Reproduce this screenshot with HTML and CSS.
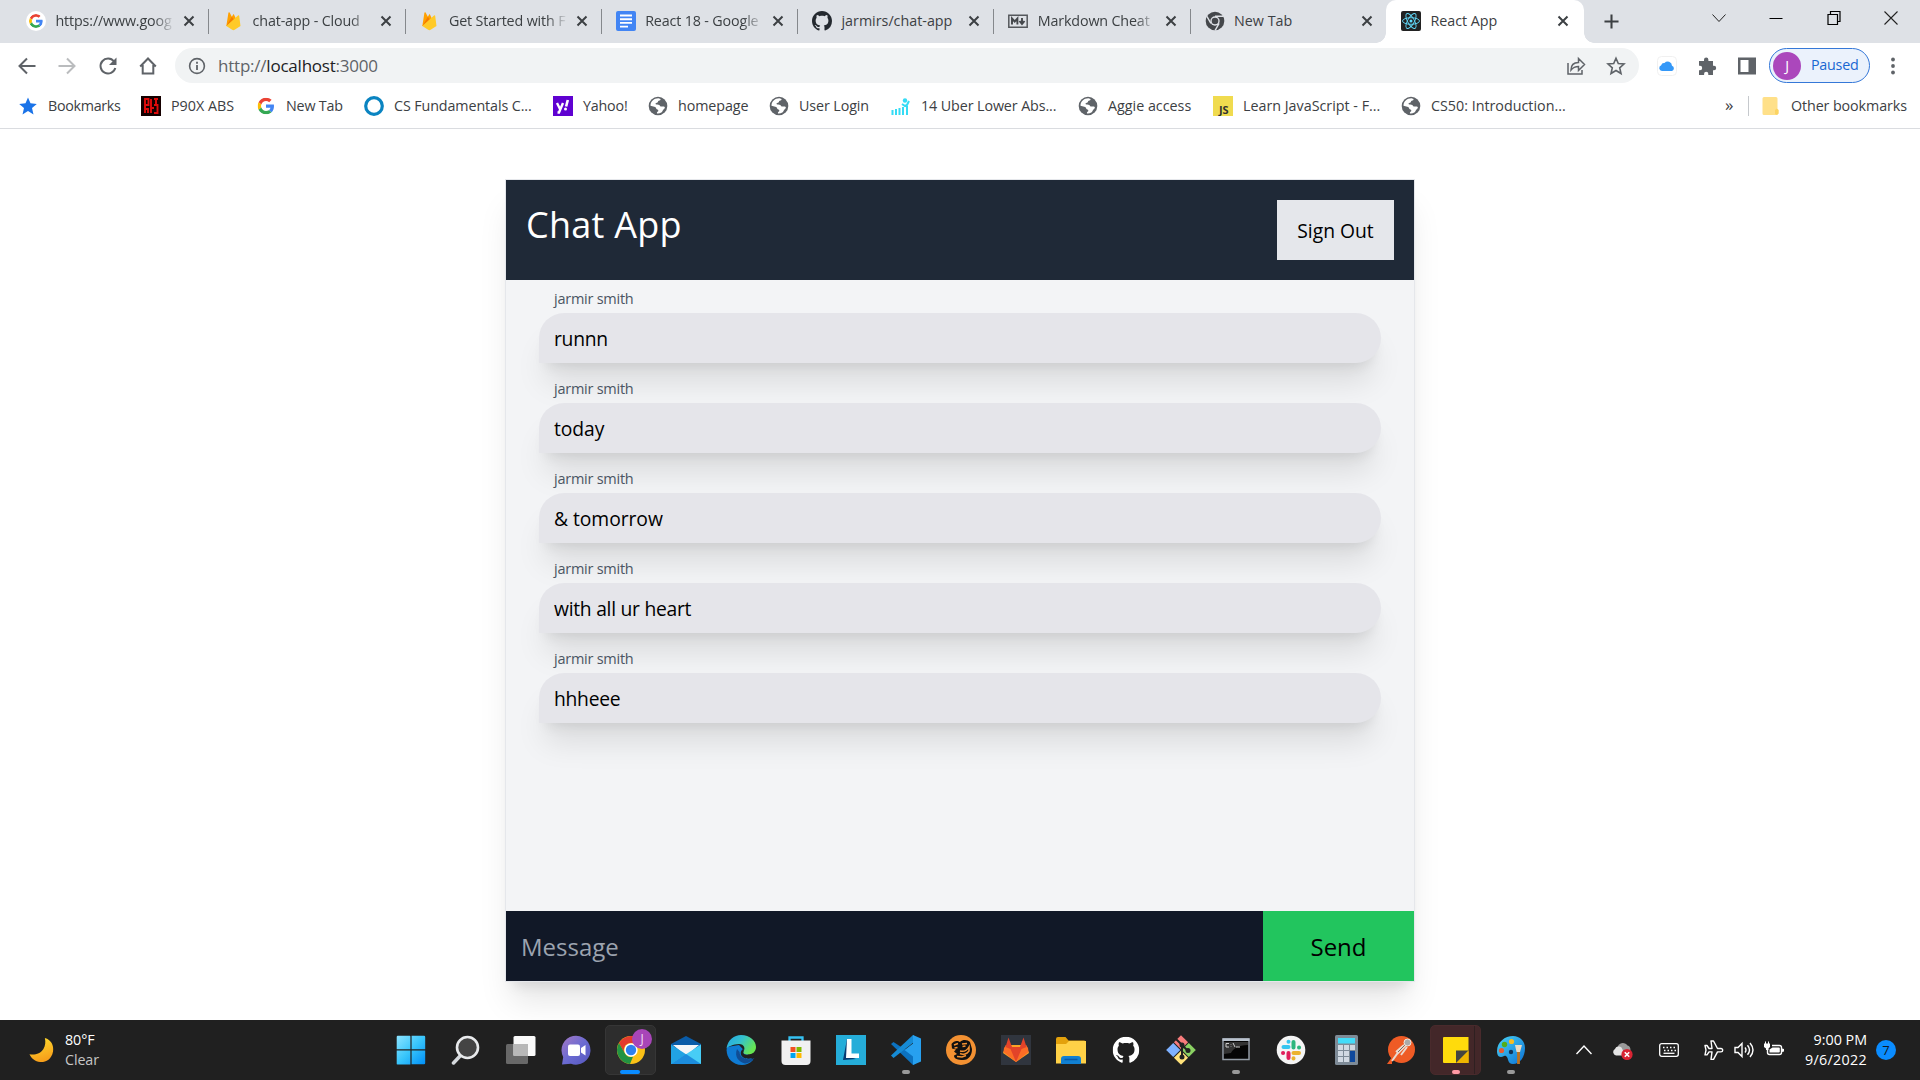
FILE: index.html
```html
<!DOCTYPE html>
<html lang="en">
<head>
<meta charset="utf-8">
<title>React App</title>
<link rel="stylesheet" href="styles.css">
</head>
<body>
<svg class="defs" width="0" height="0" aria-hidden="true">
  <defs>
    <symbol id="google" viewBox="0 0 48 48"><path fill="#ea4335" d="M24 9.5c3.5 0 6.700 1.200 9.200 3.600l6.900-6.900C35.900 2.400 30.500 0 24 0 14.600 0 6.500 5.400 2.600 13.200l8 6.200C12.400 13.700 17.700 9.500 24 9.500z"/><path fill="#4285f4" d="M47 24.500c0-1.600-.2-3.100-.4-4.500H24v9h12.900c-.6 3-2.200 5.500-4.800 7.200l7.700 6C44.400 38 47 31.800 47 24.500z"/><path fill="#fbbc05" d="M10.500 28.600a14.500 14.500 0 0 1 0-9.200l-8-6.200a24 24 0 0 0 0 21.600z"/><path fill="#34a853" d="M24 48c6.500 0 11.900-2.100 15.900-5.800l-7.700-6c-2.200 1.500-4.900 2.300-8.200 2.300-6.300 0-11.600-4.200-13.500-9.900l-8 6.200C6.500 42.600 14.600 48 24 48z"/></symbol>
    <symbol id="firebase" viewBox="0 0 20 24"><path fill="#ffa000" d="M2 18 4.500 2.200c.1-.8 1-.9 1.400-.3l2.700 5 1.500-2.500c.3-.5.9-.5 1.200 0L17 17z"/><path fill="#f57c00" d="m8.600 6.900-6.600 11 9.500-7.200z"/><path fill="#ffca28" d="m2 18 14-12.600c.5-.5 1.300-.3 1.400.4L19 18l-7 4.500c-1 .6-2 .6-3 0z"/></symbol>
    <symbol id="cross" viewBox="0 0 12 12"><path d="m1.500 1.500 9 9m0-9-9 9" fill="none" stroke="#3c4043" stroke-width="2"/></symbol>
    <symbol id="github" viewBox="0 0 16 16"><path d="M8 0C3.580 0 0 3.580 0 8c0 3.540 2.290 6.530 5.470 7.590.4.070.55-.17.55-.38 0-.19-.01-.82-.01-1.490-2.010.37-2.530-.49-2.690-.94-.09-.23-.48-.94-.82-1.130-.28-.15-.68-.52-.01-.53.63-.01 1.080.58 1.230.82.72 1.210 1.870.87 2.330.66.070-.52.28-.87.51-1.070-1.780-.2-3.640-.89-3.640-3.950 0-.87.31-1.590.82-2.150-.08-.2-.36-1.020.08-2.120 0 0 .67-.21 2.200.82.640-.18 1.320-.27 2-.27s1.360.09 2 .27c1.530-1.040 2.200-.82 2.200-.82.440 1.100.16 1.920.08 2.120.51.56.82 1.270.82 2.150 0 3.070-1.870 3.750-3.650 3.950.29.25.54.73.54 1.480 0 1.070-.01 1.930-.01 2.200 0 .21.15.46.55.38A8 8 0 0 0 16 8c0-4.420-3.580-8-8-8z"/></symbol>
    <symbol id="globe" viewBox="0 0 20 20"><circle cx="10" cy="10" r="9.300" fill="#5f6368"/><path fill="#fff" d="M10.500 2.300 12.500 3c.3 1.200-.7 1.600-1.800 1.700-.8.200-.5 1.300-1.200 1.800-.8.500-1.900.2-2 1.300 0 1 1.500.8 2.900.9 1.600.1 1.200 1.500 2.600 1.800 2 .1 3-.2 3.700.6.600 1-.6 1.900-1.400 2.600-.9.800-.8 2.200-2 2.900-1.400.9-2.900 1.100-4.300.9-.3-.9.200-1.600 1-2 .6-.5.3-1.700-.7-1.900-1.500-.3-1-1.900-2.200-2.500L2.500 9.800C2.400 5.600 6 2.200 10.500 2.300z"/></symbol>
    <symbol id="chrome-grey" viewBox="0 0 20 20"><circle cx="10" cy="10" r="9.300" fill="#44474b"/><circle cx="10" cy="10" r="4.700" fill="#dee1e6"/><circle cx="10" cy="10" r="3.300" fill="#44474b"/><path d="M10 5.300h8M14.100 12.300l-4 7M5.900 12.300l-4-7" stroke="#dee1e6" stroke-width="1.400"/></symbol>
  </defs>
</svg>

<header class="browser">
  <div class="strip">
    <div class="tab"><svg class="fav disc"><use href="#google"/></svg><span class="title">https://www.goog</span><svg class="x"><use href="#cross"/></svg></div>
    <div class="tab"><svg class="fav"><use href="#firebase"/></svg><span class="title">chat-app - Cloud</span><svg class="x"><use href="#cross"/></svg></div>
    <div class="tab"><svg class="fav"><use href="#firebase"/></svg><span class="title">Get Started with F</span><svg class="x"><use href="#cross"/></svg></div>
    <div class="tab"><svg class="fav" viewBox="0 0 20 20"><rect width="20" height="20" rx="2" fill="#4285f4"/><path d="M4 4.500h12M4 8.200h12M4 11.900h12M4 15.600h8" stroke="#fff" stroke-width="1.900"/></svg><span class="title">React 18 - Google</span><svg class="x"><use href="#cross"/></svg></div>
    <div class="tab"><svg class="fav" fill="#24292f"><use href="#github"/></svg><span class="title plain">jarmirs/chat-app</span><svg class="x"><use href="#cross"/></svg></div>
    <div class="tab"><svg class="fav" viewBox="0 0 20 20"><path d="M.8 4.200h18.400v12H.8z" fill="none" stroke="#55585c" stroke-width="1.500"/><path d="M4 13.500v-6l2.700 3 2.700-3v6M14 7v5m-2.500-2 2.500 3 2.500-3" fill="none" stroke="#44474b" stroke-width="1.900"/></svg><span class="title">Markdown Cheat</span><svg class="x"><use href="#cross"/></svg></div>
    <div class="tab last"><svg class="fav"><use href="#chrome-grey"/></svg><span class="title plain">New Tab</span><svg class="x"><use href="#cross"/></svg></div>
    <div class="tab active"><svg class="fav" viewBox="0 0 20 20"><rect width="20" height="20" rx="2" fill="#222"/><g fill="none" stroke="#61dafb" stroke-width=".9"><ellipse cx="10" cy="10" rx="8.500" ry="3.300"/><ellipse cx="10" cy="10" rx="8.500" ry="3.300" transform="rotate(60 10 10)"/><ellipse cx="10" cy="10" rx="8.500" ry="3.300" transform="rotate(120 10 10)"/></g><circle cx="10" cy="10" r="1.500" fill="#61dafb"/></svg><span class="title plain">React App</span><svg class="x"><use href="#cross"/></svg></div>
    <svg class="plus" viewBox="0 0 16 16"><path d="M8 .5v15M.5 8h15" stroke="#3c4043" stroke-width="2.200"/></svg>
    <div class="controls">
      <svg viewBox="0 0 16 16"><path d="m1.500 4.500 6.500 7 6.500-7" fill="none" stroke="#222"/></svg>
      <svg viewBox="0 0 16 16"><path d="M1.500 8.500h13" stroke="#000"/></svg>
      <svg viewBox="0 0 16 16"><path d="M2 4.500h9.500v10H2zM4.500 4.500v-3h9.500v10h-2.500" fill="none" stroke="#000" stroke-width="1.200"/></svg>
      <svg viewBox="0 0 16 16"><path d="m1.500 1.500 13 13m0-13-13 13" stroke="#222" stroke-width="1.100"/></svg>
    </div>
  </div>

  <div class="toolbar">
    <div class="nav">
      <svg viewBox="0 0 20 20"><path d="M18.500 10H3M10 2.500 2.500 10l7.500 7.500" stroke="#5f6368"/></svg>
      <svg viewBox="0 0 20 20"><path d="M1.500 10H17M10 2.500l7.500 7.500-7.500 7.500" stroke="#babcbe"/></svg>
      <svg viewBox="0 0 20 20"><path d="M16 5.500A7.500 7.500 0 1 0 17.300 12" stroke="#5f6368"/><path d="M18.500 1.500v7.500h-7.500z" fill="#5f6368" stroke="none"/></svg>
      <svg viewBox="0 0 20 20"><path d="M2.200 10.500 10 2.500l7.800 8M4.700 9v8.500h10.600V9" stroke="#5f6368"/></svg>
    </div>
    <div class="omnibox">
      <svg class="info" viewBox="0 0 18 18"><circle cx="9" cy="9" r="7.400" fill="none" stroke="#5f6368" stroke-width="1.600"/><path d="M9 8v5M9 4.700v2" stroke="#5f6368" stroke-width="1.800"/></svg>
      <span class="url">http://<b>localhost</b>:3000</span>
      <svg class="share" viewBox="0 0 20 20"><path d="M2 7v11h14v-4M5 14c0-5 3-7.500 7.500-7.500v-4l6 6-6 6v-4C9 10.500 7 11.500 5 14z" fill="none" stroke="#5f6368" stroke-width="1.500"/></svg>
      <svg class="star" viewBox="0 0 20 20"><path d="m10 2.200 2.300 5.300 5.700.5-4.300 3.800 1.300 5.700-5-3-5 3 1.300-5.700L2 8l5.700-.5z" fill="none" stroke="#5f6368" stroke-width="1.600"/></svg>
    </div>
    <div class="ext">
      <svg viewBox="0 0 20 20"><rect x=".5" y=".5" width="19" height="19" rx="4" fill="#fff" stroke="#f0f0f0"/><path d="M5 15a3 3 0 0 1-.8-5.800A3 3 0 0 1 7.500 7 4.300 4.300 0 0 1 15 9.700 2.800 2.800 0 0 1 15 15z" fill="#3498f8"/></svg>
      <svg viewBox="0 0 20 20"><path fill="#5f6368" d="M2 5h5V3.800a2.200 2.200 0 0 1 4.400 0V5H16v4.800h1a2.200 2.200 0 0 1 0 4.400h-1V19h-4.700v-1.200a2.100 2.100 0 0 0-4.200 0V19H2v-4.800h1a2.200 2.200 0 0 0 0-4.400H2z"/></svg>
      <svg viewBox="0 0 20 20"><path fill="#5f6368" fill-rule="evenodd" d="M1 1.500h18v17H1zM3.500 4v12h8V4z"/></svg>
      <div class="profile"><i>J</i><span>Paused</span></div>
      <svg viewBox="0 0 20 20" fill="#5f6368"><circle cx="10" cy="3.500" r="1.900"/><circle cx="10" cy="10" r="1.900"/><circle cx="10" cy="16.500" r="1.900"/></svg>
    </div>
  </div>

  <nav class="bookmarks">
    <a><svg viewBox="0 0 20 20"><path fill="#1a73e8" d="m10 1.500 2.500 5.800 6.300.6-4.800 4.200 1.500 6.300-5.500-3.400-5.500 3.400L6 12.100 1.200 7.900l6.300-.6z"/></svg><span class="tight">Bookmarks</span></a>
    <a><svg viewBox="0 0 20 20"><path fill="#150000" d="M0 0h20v20H0z"/><path d="M4 17V3h3.500v6H4M10 3v14M13 3h4M15 3v6M13 9h3.500v8H13M10 12h3M4 13h3v4" fill="none" stroke="#e00b0b" stroke-width="1.900"/></svg><span class="wide">P90X ABS</span></a>
    <a><svg viewBox="-2 -2 24 24"><use href="#google" width="20" height="20"/></svg>New Tab</a>
    <a><svg viewBox="0 0 20 20"><circle cx="10" cy="10" r="8.300" fill="none" stroke="#0a84c1" stroke-width="3.200"/></svg><span class="loose">CS Fundamentals C...</span></a>
    <a><svg viewBox="0 0 20 20"><path fill="#5f01d1" d="M0 0h20v20H0z"/><path d="m4 7 3 6m3-6-4 9.500H4.500" fill="none" stroke="#fff" stroke-width="2.400"/><path d="m14.800 4-1.700 6.500" stroke="#fff" stroke-width="2.600"/><circle cx="12.500" cy="13" r="1.500" fill="#fff"/></svg>Yahoo!</a>
    <a><svg><use href="#globe"/></svg><span class="loose">homepage</span></a>
    <a><svg><use href="#globe"/></svg><span class="loose">User Login</span></a>
    <a><svg viewBox="0 0 20 20"><path d="M1.500 14v5M5 13v6M8.500 12v7M12 11v8M16 10v9M11 8l3 2 2-1 2-4" fill="none" stroke="#35dcf5" stroke-width="2"/><circle cx="14" cy="4.500" r="2.200" fill="#35dcf5"/></svg><span class="loose">14 Uber Lower Abs...</span></a>
    <a><svg><use href="#globe"/></svg><span class="wide">Aggie access</span></a>
    <a><svg viewBox="0 0 20 20"><path fill="#f0db4f" d="M0 0h20v20H0z"/><text x="6" y="18" font-size="11" font-weight="700" fill="#323330">JS</text></svg><span class="wide">Learn JavaScript - F...</span></a>
    <a><svg><use href="#globe"/></svg><span class="wide">CS50: Introduction...</span></a>
    <span class="more">»</span>
    <a class="other"><svg viewBox="0 0 20 20"><path d="M3 1h12a1.500 1.500 0 0 1 1.500 1.500V13l1 1v3.500L16 19H3a1.500 1.500 0 0 1-1.500-1.500v-15A1.500 1.500 0 0 1 3 1z" fill="#ffe089"/><path d="M14 18v-4l1.700-1.500 1.800 1.500v3.500L16 19z" fill="#fcd462"/></svg><span class="loose">Other bookmarks</span></a>
  </nav>
</header>

<main class="page">
  <section class="chat">
    <div class="chat-head"><h1>Chat App</h1><button class="signout">Sign Out</button></div>
    <div class="messages">
      <article><p class="name">jarmir smith</p><p class="bubble">runnn</p></article>
      <article><p class="name">jarmir smith</p><p class="bubble">today</p></article>
      <article><p class="name">jarmir smith</p><p class="bubble">&amp; tomorrow</p></article>
      <article><p class="name">jarmir smith</p><p class="bubble">with all ur heart</p></article>
      <article><p class="name">jarmir smith</p><p class="bubble">hhheee</p></article>
    </div>
    <form class="compose"><div class="field">Message</div><button class="send" type="button">Send</button></form>
  </section>
</main>

<footer class="taskbar">
  <div class="weather">
    <svg viewBox="0 0 26 26"><defs><linearGradient id="moon" x2=".3" y2="1"><stop stop-color="#ffe02f"/><stop offset="1" stop-color="#f7a01b"/></linearGradient></defs><path d="M16.500.5C23 2.500 26 8 25 14.500 23.500 23 17 26 11.500 25.500 6.500 25 2.500 22 .5 17.500 6 18.500 12 17 15 12c2-3.500 2.500-7.500 1.500-11.500z" fill="url(#moon)"/></svg>
    <div><p>80°F</p><p class="dim">Clear</p></div>
  </div>
  <div class="apps">
    <span><svg viewBox="0 0 30 30"><defs><linearGradient id="win" x2="1" y2="1"><stop stop-color="#8de4ff"/><stop offset=".5" stop-color="#38c5fb"/><stop offset="1" stop-color="#008ff8"/></linearGradient></defs><path fill="url(#win)" d="M2 .8h11.800a.6.600 0 0 1 .6.600v12.800H.7V2A1.200 1.200 0 0 1 2 .8zM15.600.8H28A1.200 1.200 0 0 1 29.200 2v12.200H15.600zM.7 15.500h13.700v14H2A1.200 1.200 0 0 1 .7 28zM15.600 15.500h13.600V28a1.200 1.200 0 0 1-1.200 1.300H15.600z"/></svg></span>
    <span><svg viewBox="0 0 30 30"><path d="m10 20-7.500 8" stroke="#d5d9dd" stroke-width="3.500" stroke-linecap="round"/><circle cx="16.500" cy="12.500" r="10.500" fill="#444" stroke="#e8eaec" stroke-width="2.600"/></svg></span>
    <span><svg viewBox="0 0 30 30"><rect y="9" width="22" height="20" rx="1.500" fill="#686868"/><rect x="7.500" y="1" width="22" height="20" rx="1.500" fill="#fafafa"/><path fill="#b8b8b8" d="M7.500 9H22v12H7.500z"/></svg></span>
    <span><svg viewBox="0 0 30 30"><defs><linearGradient id="meet" x1="0" y1="0" x2="1" y2="1"><stop stop-color="#a678c4"/><stop offset=".5" stop-color="#6b6bd2"/><stop offset="1" stop-color="#5456bd"/></linearGradient></defs><path fill="url(#meet)" d="M1 29.500 2.200 22A14.500 14.500 0 1 1 10 28.800z"/><rect x="7" y="9.500" width="12" height="11.500" rx="2" fill="#fff"/><path fill="#fff" d="m20 13 4.500-3v10.500L20 17.500z"/></svg></span>
    <span class="running"><svg viewBox="0 0 30 30"><circle cx="15" cy="15" r="14" fill="#fbc116"/><path fill="#e33b2e" d="M2.900 8A14 14 0 0 1 27.100 8H15a7 7 0 0 0-6.500 10z"/><path fill="#229342" d="M2.900 8 9 18.500A7 7 0 0 0 17 21.700L14 29A14 14 0 0 1 2.900 8z"/><circle cx="15" cy="15" r="6.700" fill="#fff"/><circle cx="15" cy="15" r="5.200" fill="#2f80ed"/></svg><i class="user">J</i></span>
    <span><svg viewBox="0 0 30 30"><path fill="#0a5ca8" d="M0 9 15 1l15 8v12H0z"/><path fill="#f4f6f8" d="M2 10h26l-13 11z"/><path fill="#21a3e3" d="M0 9.500 30 29H0z"/><path fill="#47cdf6" d="M30 9.500 0 29h30z"/><path fill="#1c8ddd" d="m15 19 15 10H0z"/></svg></span>
    <span><svg viewBox="0 0 30 30"><defs><linearGradient id="edg" x2="1" y2=".5"><stop stop-color="#24a6e5"/><stop offset=".5" stop-color="#34c1ce"/><stop offset="1" stop-color="#67e653"/></linearGradient></defs><path fill="#0f7bd3" d="M1 12C-1 20 5 30 16 30c4 0 8-1.500 11-5l-14-15z"/><path fill="#104d94" d="M11 14c-3 8 2 13 8 14.500 3-.5 7-2 9.500-5.500-7 3-15 0-15-6z"/><path fill="url(#edg)" d="M.5 13C2 5 8 0 15 0c9 0 15 6 15 12 0 5-4 7.500-8 7.500-4.500 0-5.500-2-4.500-3.500 2-2 1-7-4.500-7C7 9 2 12 .5 13z"/><path fill="#202020" d="M17 14c2 2-.5 3 .8 4.700 2 1.600 7 1.300 10-.7l1 4c-5 3-13 2-14-3-.300-2 .5-4 2.200-5z"/></svg></span>
    <span><svg viewBox="0 0 30 30"><path d="M8.500 7V2.500h13V7" fill="none" stroke="#35c1f1" stroke-width="2.300"/><path d="M.5 5.500h29V26a4 4 0 0 1-4 4h-21a4 4 0 0 1-4-4z" fill="#f1f1f1"/><path fill="#f25022" d="M9.500 12h5v5h-5z"/><path fill="#7fba00" d="M15.500 12h5v5h-5z"/><path fill="#00a4ef" d="M9.500 18h5v5h-5z"/><path fill="#ffb900" d="M15.500 18h5v5h-5z"/></svg></span>
    <span><svg viewBox="0 0 30 30"><path fill="#25add9" d="M0 0h30v30H0z"/><path fill="#073a71" d="m11 4-4 21 13-1-9-3z"/><path d="M11 4h4.500v14.500H23V23H10z" fill="#fff"/></svg></span>
    <span class="open"><svg viewBox="0 0 30 30"><path fill="#0c72c0" d="m0 9 2.500-2L30 25l-8 5z"/><path fill="#168bd5" d="M0 20.500 22 0l5 4L2.500 23z"/><path fill="#27a0ef" fill-rule="evenodd" d="m22 0 8 3.500v23L22 30zM22 8.500v13L13.500 15z"/></svg></span>
    <span><svg viewBox="0 0 30 30"><circle cx="15" cy="15" r="15" fill="#f39132"/><path fill="#111" d="M5.500 9C8 5 12 5.500 14 7c3-3 8-2 10 0l2 7c0 6-3 11-9 11-5 0-9-1-9-4.500l3-1.500-3-2.500 2-2-4-1z"/><path d="m8 10 4-1.500M8.500 13l3-.5M16 9l5-.5M16.500 11.500l3-.5M14 16c4 1 7-.5 9-4v4c-2 3-6 4-9 2.500M11 21.500l5 .5 4-1.500" fill="none" stroke="#f39132" stroke-width="1.500"/></svg></span>
    <span><svg viewBox="0 0 30 30"><path fill="#30353e" d="M0 0h30v30H0z"/><path fill="#fca326" d="m2 18 3-8h20l3 8-13 9z"/><path fill="#fc6d26" d="m3 13 2-3h5l5 17L2.500 17zM27 13l-2-3h-5l-5 17 12.500-10z"/><path fill="#e24329" d="m4.500 12 3-9.500L11 12h8l3.500-9.500 3 9.500-5 2L15 27 9.500 14z"/></svg></span>
    <span><svg viewBox="0 0 30 30"><path fill="#e3a10c" d="M0 4a2 2 0 0 1 2-2h7.500l3 3.500H28A2 2 0 0 1 30 7v5H0z"/><path fill="#ffd147" d="M0 9h10l3-3h17v22.500H0z"/><path fill="#1180d2" d="M5 29v-5a3 3 0 0 1 3-3h14a3 3 0 0 1 3 3v5z"/><path d="M8.500 24.500h13" stroke="#0959a7" stroke-width="1.500"/></svg></span>
    <span><svg viewBox="-1 -1 18 18" fill="#fff"><use href="#github" width="16" height="16"/></svg></span>
    <span><svg viewBox="0 0 30 30"><g transform="rotate(45 15 15)"><path fill="#f77b7b" d="M4.500 4.500h10v10h-10z"/><path fill="#8bd163" d="M15.500 4.500h10v10h-10z"/><path fill="#7eb1ff" d="M4.500 15.500h10v10h-10z"/><path fill="#ffe27a" d="M15.500 15.500h10v10h-10z"/></g><path d="m10 4 6 6v12M16 10l6 6" fill="none" stroke="#222" stroke-width="2"/><circle cx="16" cy="10" r="2.500" fill="#222"/><circle cx="22" cy="15.500" r="2.500" fill="#222"/><circle cx="16" cy="22" r="2.500" fill="#222"/></svg></span>
    <span class="open"><svg viewBox="0 0 30 30"><path fill="#050505" stroke="#929ba5" stroke-width="1.500" d="M2 4h26v20.500H2z"/><path fill="#b9c2cd" d="M1.500 3.300h27V6h-27z"/><path fill="#333" d="M3 7h24v3C17 10 12 14 10 18l-7 1z"/><path d="M8 8.500H5v3.500h3m2-3v.5m0 2v.5m2-4 2 4m1 0h4" fill="none" stroke="#ccc" stroke-width="1"/></svg></span>
    <span><svg viewBox="0 0 30 30"><circle cx="15" cy="15" r="14.300" fill="#f5f5f5"/><g fill="none" stroke-width="4" stroke-linecap="round"><path stroke="#36c5f0" d="M7.500 12h5M12.500 6.700v.1"/><path stroke="#2eb67d" d="M17.500 7v5.500M23 12.500h.1"/><path stroke="#ecb22e" d="M17.500 18H23M17.500 23.300v.1"/><path stroke="#e01e5a" d="M12.500 18v5M7 18h.1"/></g></svg></span>
    <span><svg viewBox="0 0 30 30"><rect x="4" width="23" height="30" rx="1.500" fill="#7e8b97"/><path fill="#43dcf9" d="M7 3h17v5.500H7z"/><path d="M7 10h5v5H7zm6 0h5v5h-5zm6 0h5v5h-5zM7 16h5v5H7zm6 0h5v5h-5zM7 22h5v5H7zm6 0h5v5h-5z" fill="#d1d9e2"/><path fill="#0e489c" d="M19 16h5v11h-5z"/></svg></span>
    <span><svg viewBox="0 0 30 30"><circle cx="15.500" cy="14.500" r="13.500" fill="#ef5b25"/><path fill="#ef5b25" d="M1 29 6 22v7z"/><path d="m20 10-9 9-5 7M18 10l-8 7m11-5-6 8" fill="none" stroke="#ead9cf" stroke-width="2"/><path d="m20 9-8 8" stroke="#5d4b43" stroke-width=".8"/><circle cx="21.500" cy="7.500" r="3.500" fill="#aaa" stroke="#f3e7df" stroke-width="1"/></svg></span>
    <span class="notes open"><svg viewBox="0 0 30 30"><path fill="#ffdb0c" d="M2 3a1 1 0 0 1 1-1h24.500v26H3a1 1 0 0 1-1-1z"/><path fill="#efb400" d="M15 28 27.500 16v12z"/><path fill="#45443f" d="M15 15.500h12.500L15 28z"/></svg></span>
    <span class="open"><svg viewBox="0 0 30 30"><defs><linearGradient id="pnt" x2="1" y2="1"><stop stop-color="#49d3f5"/><stop offset="1" stop-color="#0d72d4"/></linearGradient></defs><path fill="url(#pnt)" d="M1 16C1 7 9 1 17 1c7 0 12 5 12 12 0 9-5 16-12 16-6 0-4-6-7-8-2-1-3 1-5 1-3 0-4-3-4-6z"/><circle cx="5.500" cy="15.500" r="2.600" fill="#e75b32"/><circle cx="8.500" cy="9.500" r="2.700" fill="#53ad19"/><circle cx="15.500" cy="6.500" r="2.600" fill="#f8bd22"/><circle cx="15" cy="17" r="2.200" fill="#113458"/><path d="M22.500 16v13" stroke="#bd711d" stroke-width="2.800"/><path fill="#e9dac2" d="M19 10h7l-2 7h-3.500z"/></svg></span>
  </div>
  <div class="tray">
    <svg class="chev" viewBox="0 0 20 20"><path d="m2.500 14 7.500-8 7.500 8" fill="none" stroke="#fff" stroke-width="1.400"/></svg>
    <svg class="cloud" viewBox="0 0 20 20"><path fill="#999" d="M5 11a5.500 5.500 0 0 1 9.500-5.500c2 .5 3 2 3 5z"/><path d="M3 15.500A3.500 3.500 0 0 1 2 9a4 4 0 0 1 6.500-1.500l4 8z" fill="#e4e4e4"/><circle cx="14" cy="14.500" r="5.600" fill="#d92433"/><path d="m11.800 12.300 4.400 4.400m0-4.400-4.400 4.400" stroke="#fff" stroke-width="1.600"/></svg>
    <svg class="kbd" viewBox="0 0 20 20"><rect x=".7" y="3.700" width="18.600" height="12.600" rx="2" fill="none" stroke="#fff" stroke-width="1.300"/><path d="M4 7.500h12.500M5 10.500h12" stroke="#fff" stroke-width="1.500" stroke-dasharray="1.500 2"/><path d="M4.500 13.300h11" stroke="#fff" stroke-width="1.300"/></svg>
    <svg class="plane" viewBox="0 0 20 20"><path d="M1 5.500h2l2 3h3L7 1h2.500l4 7.500H17a1.700 1.700 0 0 1 0 3.400h-3.500l-4 7.500H7l1-7.500H5l-2 3H1l1-4.700z" fill="none" stroke="#fff" stroke-width="1.400" stroke-linejoin="round"/></svg>
    <svg class="sound" viewBox="0 0 20 20"><path d="M1 7.500h3l4-4v13l-4-4H1zM11 7.500q2 2.500 0 5M13.500 5.200q4 4.800 0 9.600M16 3q6 7 0 14" fill="none" stroke="#fff" stroke-width="1.400"/></svg>
    <svg class="batt" viewBox="0 0 20 20"><path d="M8 5.500h7.500a2 2 0 0 1 2 2v5a2 2 0 0 1-2 2H5.500a2 2 0 0 1-2-2V9" fill="none" stroke="#fff" stroke-width="1.400"/><path fill="#fff" d="M8.500 7.500H15a.8.800 0 0 1 .8.800v3.500a.8.800 0 0 1-.8.800H5.500V9.500zM18 8.500l2 .5v2.500l-2 .5zM0 3.500h1V1.500h1v2h2v-2h1v2h1V7L4.500 8.500V10H2V8.500L0 7z"/></svg>
    <div class="clock"><p>9:00 PM</p><p class="date">9/6/2022</p></div>
    <b class="count">7</b>
  </div>
</footer>
</body>
</html>
```
FILE: styles.css
```css
* { box-sizing: border-box; margin: 0; padding: 0; }
body {
  width: 1920px; height: 1080px; overflow: hidden;
  display: flex; flex-direction: column;
  background: #fff; color: #3c4043;
  font-family: "Open Sans", "Noto Sans", sans-serif;
}
svg { display: block; flex: none; }
.defs { position: absolute; }
button { border: 0; font: inherit; }

/* tab strip */
.browser { height: 129px; flex: none; border-bottom: 1px solid #dadce0; font-size: 14.3px; }
.strip { display: flex; height: 43px; background: #dee1e6; padding-left: 12px; }
.tab { width: 196.300px; height: 43px; display: flex; align-items: center; padding: 0 12px 1px 14px; position: relative; flex: none; }
.tab:not(.last):not(.active)::after { content: ""; position: absolute; right: -1px; top: 9px; width: 1px; height: 25px; background: #85888c; }
.fav { width: 20px; height: 20px; margin-right: 9.500px; }
.tab:not(:first-child) .fav { margin-left: .8px; }
.disc { background: #fff; border-radius: 50%; padding: 3px; }
.title { width: 119px; margin-top: -2px; white-space: nowrap; overflow: hidden; letter-spacing: -.15px;
  -webkit-mask-image: linear-gradient(90deg, #000 82%, transparent); mask-image: linear-gradient(90deg, #000 82%, transparent); }
.plain { -webkit-mask-image: none; mask-image: none; letter-spacing: 0; }
.x { width: 12px; height: 12px; margin-left: auto; margin-right: 1px; }
.active { background: #fff; border-radius: 10px 10px 0 0; width: 198px; padding-right: 14px; }
.active::before, .active::after { content: ""; position: absolute; bottom: 0; width: 10px; height: 10px; }
.active::before { left: -10px; background: radial-gradient(circle at 0 0, #dee1e6 9.500px, #fff 10px); }
.active::after { right: -10px; background: radial-gradient(circle at 100% 0, #dee1e6 9.500px, #fff 10px); }
.plus { width: 15px; height: 15px; margin: 14px 0 0 20px; }
.controls { display: flex; gap: 41.500px; margin: 10px 21px 0 auto; }
.controls svg { width: 16px; height: 16px; }

/* toolbar */
.toolbar { display: flex; height: 45px; align-items: center; }
.nav { display: flex; gap: 20.300px; padding-left: 17px; width: 175px; }
.nav svg { width: 20px; height: 20px; fill: none; stroke-width: 2; }
.omnibox { display: flex; align-items: center; width: 1464px; height: 35px; border-radius: 18px; background: #f1f3f4; padding: 0 13px; }
.info { width: 18px; height: 18px; margin-right: 12px; }
.url { font-size: 17px; letter-spacing: -.22px; color: #5f6368; }
.url b { font-weight: 400; color: #202124; }
.share, .star { width: 20px; height: 20px; }
.share { margin-left: auto; margin-right: 20px; }
.ext { display: flex; align-items: center; flex: 1; padding: 0 17px 0 18px; gap: 20px; }
.ext svg { width: 20px; height: 20px; }
.ext svg:nth-of-type(3) { margin-right: -8px; }
.ext svg:last-child { margin-left: -7px; }
.profile { display: flex; align-items: center; gap: 10px; width: 101px; height: 35px; border: 1.500px solid #3578d8; border-radius: 18px; background: #ebf2fc; padding-left: 3px; color: #1967d2; letter-spacing: -.25px; }
.profile span { margin-top: -2px; }
.profile i { width: 28px; height: 28px; border-radius: 50%; background: #ab47bc; color: #fff; font-style: normal; text-align: center; line-height: 28px; }

/* bookmarks bar */
.bookmarks { display: grid; align-items: center; height: 35px; padding-left: 18px; white-space: nowrap; letter-spacing: -.2px;
  grid-template-columns: 123px 115px 108px 189px 95px 121px 122px 187px 135px 188px 324px 23px 172px; }
.bookmarks a { display: flex; align-items: center; gap: 10px; }
.bookmarks a svg { width: 20px; height: 20px; }
.tight { letter-spacing: -.3px; }
.loose { letter-spacing: -.1px; }
.wide { letter-spacing: 0; }
.more { font-size: 17px; margin-top: -3px; }
.bookmarks .other { border-left: 1px solid #c6c9cd; height: 20px; padding-left: 12px; }

/* chat application */
.page { flex: 1; padding-top: 50px; color: #000; }
.chat { width: 910px; height: 803px; margin: 0 auto; border: 1px solid #e5e7eb; display: flex; flex-direction: column; background: #f3f4f6;
  box-shadow: 0 25px 31px -6px rgba(0,0,0,.1), 0 10px 12.500px -7.500px rgba(0,0,0,.1); }
.chat-head { height: 100px; flex: none; display: flex; justify-content: space-between; background: #1f2937; padding: 20px; color: #fff; }
.chat-head h1 { font-size: 36px; font-weight: 400; line-height: 50px; letter-spacing: .25px; }
.signout { width: 117px; height: 60px; background: #e5e7eb; font-size: 19.300px; color: #000; }
.messages { flex: 1; padding: 7px 33px 0; }
.messages article { height: 90px; }
.name { height: 26px; line-height: 24px; padding-left: 15px; font-size: 14.500px; letter-spacing: -.25px; color: #4b5563; }
.bubble { height: 50px; line-height: 51px; padding-left: 15px; font-size: 19.300px; letter-spacing: -.27px; background: #e5e5ea; border-radius: 25px 25px 25px 0;
  box-shadow: 0 25px 31px -6px rgba(0,0,0,.1), 0 10px 12.500px -7.500px rgba(0,0,0,.1); }
article:nth-child(2) .bubble, article:nth-child(3) .bubble { letter-spacing: -.05px; }
.compose { display: flex; height: 70px; flex: none; font-size: 24px; }
.field { flex: 1; background: #111827; color: #9ca3af; padding-left: 15px; line-height: 72px; }
.send { width: 151px; background: #22c55e; color: #000; }

/* taskbar */
.taskbar { height: 60px; flex: none; display: flex; align-items: center; background: #202020; color: #fff; position: relative; z-index: 1; font-size: 14.300px; }
.weather { display: flex; align-items: center; gap: 11px; width: 383px; padding-left: 29px; line-height: 20px; letter-spacing: -.1px; }
.weather svg { width: 25px; height: 26px; }
.dim { color: #c6c6c6; }
.apps { display: flex; }
.apps span { width: 55px; height: 60px; display: flex; align-items: center; justify-content: center; position: relative; }
.apps span > svg { width: 30px; height: 30px; position: relative; z-index: 1; }
.apps .running::before, .apps .notes::before { content: ""; position: absolute; inset: 5px 2px; border-radius: 5px; background: #2d2d2d; border: 1px solid #363636; }
.apps .notes::before { background: linear-gradient(90deg, #432729 43px, #2e2021 43px, #2e2021 44px, #432729 44px); border-color: #492a2c; }
.running::after, .open::after { content: ""; position: absolute; left: 24px; top: 50px; width: 8px; height: 4px; border-radius: 2px; background: #999; }
.running::after { left: 17px; width: 20px; background: #0a8cff; }
.notes::after { background: #ff99a4; }
.user { position: absolute; z-index: 2; left: 29px; top: 9px; width: 20px; height: 20px; border-radius: 50%; background: #a845b8; color: #f1dff4; font: 12px/20px "Open Sans", sans-serif; text-align: center; }
.tray { display: flex; align-items: center; margin-left: auto; padding-right: 24px; }
.tray svg { width: 20px; height: 20px; }
.tray .chev { margin-right: 19px; }
.tray .cloud { margin-right: 26px; }
.tray .kbd { margin-right: 25px; }
.tray .plane, .tray .sound { margin-right: 10px; }
.clock { width: 83px; text-align: right; line-height: 20px; letter-spacing: 0; }
.date { letter-spacing: .3px; }
.count { width: 20px; height: 20px; margin-left: 9px; border-radius: 50%; background: #0a8cff; color: #101820; text-align: center; line-height: 20px; font-size: 13px; font-weight: 400; }
```
